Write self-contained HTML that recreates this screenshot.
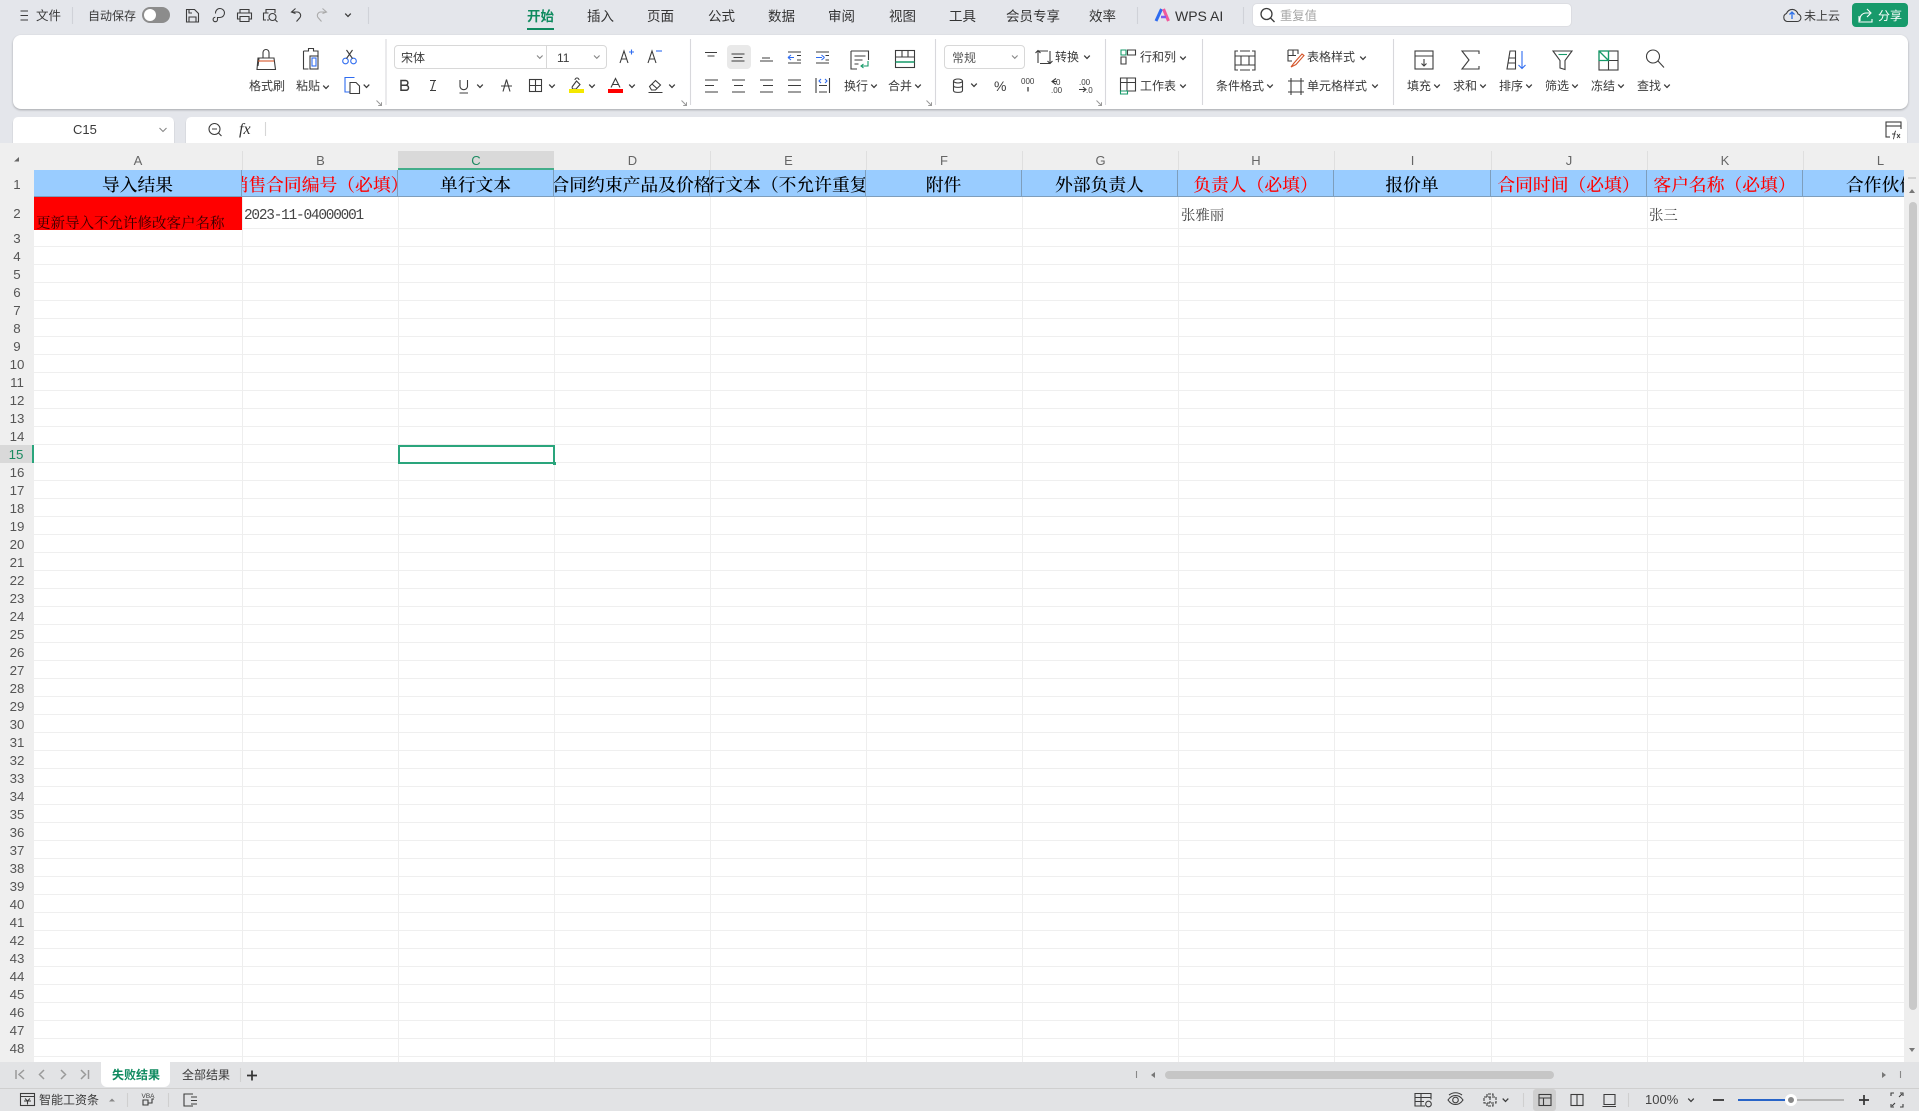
<!DOCTYPE html>
<html lang="zh-CN"><head><meta charset="utf-8"><title>WPS</title>
<style>
html,body{margin:0;padding:0}
body{width:1919px;height:1111px;position:relative;overflow:hidden;background:#e4e6eb;font-family:"Liberation Sans","Noto Sans CJK SC",sans-serif;color:#333}
div{box-sizing:border-box}
.a{position:absolute}
.t{position:absolute;white-space:nowrap;font-size:12px;line-height:16px;color:#3a3a3a}
.tab{font-size:13.5px;top:9px;color:#333}
.box{position:absolute;background:#fff;border:1px solid #d4d4d8;border-radius:4px}
#ribbon{position:absolute;left:13px;top:35px;width:1895px;height:74px;background:#fff;border-radius:8px;box-shadow:0 1px 2px rgba(0,0,0,.28)}
#grid{position:absolute;left:0;top:143px;width:1919px;height:919px;background:#fff;overflow:hidden}
#hdr{position:absolute;left:0;top:0;width:1919px;height:27px;background:#efefef}
#rn{position:absolute;left:0;top:27px;width:34px;height:892px;background:#efefef;overflow:hidden}
#rn div{height:18px;line-height:20px;text-align:center;font-size:13.3px;color:#555}
.l{position:absolute;top:8px;height:19px;line-height:19px;text-align:center;font-size:13px;color:#666}
.c{position:absolute;top:27px;height:27px;line-height:29px;text-align:center;overflow:hidden;white-space:nowrap;background:#99ccff;font-family:"Noto Serif CJK SC",serif;font-size:17.8px;color:#000;font-weight:500;border-right:1px solid #7e9ebc;border-bottom:1px solid #7e9ebc}
.r{color:#f00}
.v{position:absolute;top:54px;height:865px;width:1px;background:#eeeeee}
.d{position:absolute;font-family:"Noto Serif CJK SC",serif;font-size:14.4px;white-space:nowrap;color:#444;line-height:18px}
#icons{position:absolute;left:0;top:0;z-index:5}
#icons text{fill:#3c3c3c;stroke:none;font-family:"Liberation Sans",sans-serif}
</style></head><body>

<div class="box" style="left:1252px;top:3px;width:320px;height:24px;border-radius:5px;border-color:#dcdde2"></div>
<div class="a" style="left:1852px;top:3px;width:56px;height:24px;background:#179a6b;border-radius:4px"></div>
<div class="a" style="left:527px;top:28px;width:27px;height:2px;background:#0f8a5f"></div>

<div class="t" style="left:36px;top:8px;font-size:12.5px">文件</div>
<div class="t" style="left:88px;top:8px">自动保存</div>
<div class="t tab" style="left:527px;color:#0f8a5f;font-weight:700">开始</div>
<div class="t tab" style="left:587px">插入</div>
<div class="t tab" style="left:647px">页面</div>
<div class="t tab" style="left:708px">公式</div>
<div class="t tab" style="left:768px">数据</div>
<div class="t tab" style="left:828px">审阅</div>
<div class="t tab" style="left:889px">视图</div>
<div class="t tab" style="left:949px">工具</div>
<div class="t tab" style="left:1006px">会员专享</div>
<div class="t tab" style="left:1089px">效率</div>
<div class="t tab" style="left:1175px;font-size:14px;top:8px">WPS AI</div>
<div class="t" style="left:1280px;top:8px;color:#a6a6a6;font-size:12.3px">重复值</div>
<div class="t" style="left:1804px;top:8px">未上云</div>
<div class="t" style="left:1878px;top:8px;color:#fff">分享</div>

<div id="ribbon"></div>
<div class="t" style="left:249px;top:78px;z-index:2">格式刷</div>
<div class="t" style="left:296px;top:78px;z-index:2">粘贴</div>
<div class="box" style="left:394px;top:45px;width:213px;height:24px;z-index:2;border-color:#d8d8d8"></div>
<div class="a" style="left:546px;top:45px;width:1px;height:24px;background:#d8d8d8;z-index:2"></div>
<div class="t" style="left:401px;top:50px;z-index:2">宋体</div>
<div class="t" style="left:557px;top:50px;z-index:2">11</div>
<div class="a" style="left:727px;top:45px;width:24px;height:24px;background:#e9e9e9;border-radius:4px;z-index:2"></div>
<div class="t" style="left:844px;top:78px;z-index:2">换行</div>
<div class="t" style="left:888px;top:78px;z-index:2">合并</div>
<div class="box" style="left:944px;top:45px;width:81px;height:24px;z-index:2;border-color:#d8d8d8"></div>
<div class="t" style="left:952px;top:50px;z-index:2;color:#555">常规</div>
<div class="t" style="left:1055px;top:49px;z-index:2">转换</div>
<div class="t" style="left:1140px;top:49px;z-index:2">行和列</div>
<div class="t" style="left:1140px;top:78px;z-index:2">工作表</div>
<div class="t" style="left:1216px;top:78px;z-index:2">条件格式</div>
<div class="t" style="left:1307px;top:49px;z-index:2">表格样式</div>
<div class="t" style="left:1307px;top:78px;z-index:2">单元格样式</div>
<div class="t" style="left:1407px;top:78px;z-index:2">填充</div>
<div class="t" style="left:1453px;top:78px;z-index:2">求和</div>
<div class="t" style="left:1499px;top:78px;z-index:2">排序</div>
<div class="t" style="left:1545px;top:78px;z-index:2">筛选</div>
<div class="t" style="left:1591px;top:78px;z-index:2">冻结</div>
<div class="t" style="left:1637px;top:78px;z-index:2">查找</div>

<div class="a" style="left:13px;top:117px;width:161px;height:26px;background:#fff;border-radius:5px 5px 0 0;box-shadow:0 1px 1px rgba(0,0,0,.3)"></div>
<div class="a" style="left:186px;top:117px;width:1721px;height:26px;background:#fff;border-radius:5px 5px 0 0;box-shadow:0 1px 1px rgba(0,0,0,.3)"></div>
<div class="t" style="left:73px;top:122px;font-size:13px">C15</div>
<div class="t" style="left:239px;top:122px;font-family:'Liberation Serif',serif;font-style:italic;font-size:16px;color:#333">fx</div>

<div id="grid">
 <div id="hdr"></div>
 <div class="l" style="left:34px;width:208px">A</div>
 <div class="l" style="left:242px;width:157px">B</div>
 <div class="l" style="left:398px;width:156px;background:#d9d9d9;color:#1a8a60">C</div>
 <div class="l" style="left:554px;width:157px">D</div>
 <div class="l" style="left:710px;width:157px">E</div>
 <div class="l" style="left:866px;width:156px">F</div>
 <div class="l" style="left:1022px;width:157px">G</div>
 <div class="l" style="left:1178px;width:156px">H</div>
 <div class="l" style="left:1334px;width:157px">I</div>
 <div class="l" style="left:1491px;width:156px">J</div>
 <div class="l" style="left:1647px;width:156px">K</div>
 <div class="l" style="left:1803px;width:155px">L</div>
 <div class="a" style="left:242px;top:8px;width:1px;height:19px;background:#dfdfdf"></div>
 <div class="a" style="left:710px;top:8px;width:1px;height:19px;background:#dfdfdf"></div>
 <div class="a" style="left:866px;top:8px;width:1px;height:19px;background:#dfdfdf"></div>
 <div class="a" style="left:1022px;top:8px;width:1px;height:19px;background:#dfdfdf"></div>
 <div class="a" style="left:1178px;top:8px;width:1px;height:19px;background:#dfdfdf"></div>
 <div class="a" style="left:1334px;top:8px;width:1px;height:19px;background:#dfdfdf"></div>
 <div class="a" style="left:1491px;top:8px;width:1px;height:19px;background:#dfdfdf"></div>
 <div class="a" style="left:1647px;top:8px;width:1px;height:19px;background:#dfdfdf"></div>
 <div class="a" style="left:1803px;top:8px;width:1px;height:19px;background:#dfdfdf"></div>
 <div class="a" style="left:398px;top:25px;width:156px;height:2px;background:#43ad8a"></div>

 <div class="a" style="left:34px;top:86px;width:1870px;height:833px;background:repeating-linear-gradient(to bottom,#fff 0,#fff 17px,#efefef 17px,#efefef 18px)"></div>
 <div class="a" style="left:34px;top:85px;width:1870px;height:1px;background:#efefef"></div>
 <div class="v" style="left:242px"></div><div class="v" style="left:398px"></div><div class="v" style="left:554px"></div><div class="v" style="left:710px"></div><div class="v" style="left:866px"></div><div class="v" style="left:1022px"></div><div class="v" style="left:1178px"></div><div class="v" style="left:1334px"></div><div class="v" style="left:1491px"></div><div class="v" style="left:1647px"></div><div class="v" style="left:1803px"></div>

 <div class="c" style="left:34px;width:208px">导入结果</div>
 <div class="c r" style="left:242px;width:156px"><span style="display:inline-block;margin:0 -12px">销售合同编号（必填）</span></div>
 <div class="c" style="left:398px;width:156px">单行文本</div>
 <div class="c" style="left:554px;width:156px"><span style="display:inline-block;margin:0 -3px">合同约束产品及价格</span></div>
 <div class="c" style="left:710px;width:156px"><span style="display:inline-block;margin:0 -21px">多行文本（不允许重复）</span></div>
 <div class="c" style="left:866px;width:156px">附件</div>
 <div class="c" style="left:1022px;width:156px">外部负责人</div>
 <div class="c r" style="left:1178px;width:156px">负责人（必填）</div>
 <div class="c" style="left:1334px;width:157px">报价单</div>
 <div class="c r" style="left:1491px;width:156px">合同时间（必填）</div>
 <div class="c r" style="left:1647px;width:156px">客户名称（必填）</div>
 <div class="c" style="left:1803px;width:101px;border-right:0;text-align:left;padding-left:43px">合作伙伴</div>

 <div class="a" style="left:34px;top:54px;width:208px;height:33px;background:#f00"></div>
 <div class="d" style="left:36px;top:71px;color:#300;font-size:14.5px">更新导入不允许修改客户名称</div>
 <div class="d" style="left:244px;top:64px;font-family:'Liberation Mono',monospace;font-size:14.4px;letter-spacing:-1.2px">2023-11-04000001</div>
 <div class="d" style="left:1181px;top:63px">张雅丽</div>
 <div class="d" style="left:1649px;top:63px">张三</div>

 <div class="a" style="left:398px;top:302px;width:157px;height:19px;border:2px solid #2aa57c"></div>
 <div class="a" style="left:553px;top:319px;width:3px;height:3px;background:#2aa57c"></div>

 <div id="rn">
  <div style="height:27px;line-height:29px">1</div>
  <div style="height:32px;line-height:34px">2</div>
  <div>3</div><div>4</div><div>5</div><div>6</div><div>7</div><div>8</div><div>9</div><div>10</div><div>11</div><div>12</div><div>13</div><div>14</div>
  <div style="background:#d9d9d9;color:#1a8a60;border-right:2px solid #2aa57c">15</div>
  <div>16</div><div>17</div><div>18</div><div>19</div><div>20</div><div>21</div><div>22</div><div>23</div><div>24</div><div>25</div><div>26</div><div>27</div><div>28</div><div>29</div><div>30</div><div>31</div><div>32</div><div>33</div><div>34</div><div>35</div><div>36</div><div>37</div><div>38</div><div>39</div><div>40</div><div>41</div><div>42</div><div>43</div><div>44</div><div>45</div><div>46</div><div>47</div><div>48</div><div>49</div>
 </div>
 <div class="a" style="left:1904px;top:27px;width:15px;height:892px;background:#eeeeee"></div>
 <div class="a" style="left:1909px;top:59px;width:8px;height:808px;background:#c9c9c9;border-radius:4px"></div>
</div>

<div class="a" style="left:0;top:1062px;width:1919px;height:26px;background:#e2e3e5"></div>
<div class="a" style="left:0;top:1088px;width:1919px;height:23px;background:#e2e3e5;border-top:1px solid #cfcfcf"></div>
<div class="a" style="left:101px;top:1062px;width:69px;height:25px;background:#fff;border-radius:0 0 6px 6px"></div>
<div class="t" style="left:112px;top:1067px;color:#0f8a5f;font-weight:700;font-size:12px">失败结果</div>
<div class="t" style="left:182px;top:1067px">全部结果</div>
<div class="a" style="left:1165px;top:1071px;width:389px;height:8px;background:#c6c6c6;border-radius:4px"></div>
<div class="t" style="left:39px;top:1092px;font-size:12px">智能工资条</div>
<div class="a" style="left:1533px;top:1089px;width:23px;height:22px;background:#cfcfcf;border-radius:3px"></div>
<div class="t" style="left:1645px;top:1092px;color:#444;font-size:13px">100%</div>
<div class="a" style="left:1738px;top:1099px;width:53px;height:2px;background:#2764c8"></div>
<div class="a" style="left:1791px;top:1099px;width:53px;height:2px;background:#b3b3b3"></div>
<div class="a" style="left:1785px;top:1094px;width:12px;height:12px;background:#888;border:3px solid #fff;border-radius:50%"></div>

<svg id="icons" width="1919" height="1111" viewBox="0 0 1919 1111" fill="none" stroke="#3c3c3c" stroke-width="1.1">
<defs><path id="c" d="M-2.8-1.400 0 1.400 2.800-1.400" stroke-width="1.300"/><path id="k" d="M-2.500-2.500 2.500 2.500M2.500-.8V2.500H-.8" stroke="#999" stroke-width="1"/></defs>

<path d="M20.500 11H28M20.500 15.500H28M20.500 20H28"/>
<path stroke="#d0d2d8" d="M72.500 7V24M368.500 7V24M1137.500 7V24M1243.500 7V24"/>
<rect x="142" y="7" width="28" height="16" rx="8" fill="#8c8c8c" stroke="none"/><circle cx="150" cy="15" r="6" fill="#fff" stroke="none"/>
<path d="M186.500 9.500h8l4 4v8.500h-12zM189 22v-5h7v5M189 10v3h3"/>
<path d="M215.500 13.500a4.500 4.500 0 1 1 4.500 4h-2.500v2a2.200 2.200 0 1 1-2.200-2.200"/>
<path d="M240 13V9.500h9V13M240 19h-2.500v-6h14v6H249M240 16.500h9v5h-9z"/>
<path d="M266 13V9.500h9V13M266 20h-2.500v-7h5M267 20h2"/><circle cx="272.500" cy="17" r="3.500"/><path d="M275 19.500l2.500 2.500"/>
<path d="M295.500 8.500l-4 3.500 4 1.500M291.500 12h5.500a3.500 3.500 0 0 1 3 5.500l-3.500 4"/>
<path stroke="#aaa" d="M322.500 8.500l4 3.500-4 1.500M326.500 12H321a3.500 3.500 0 0 0-3 5.500l3.500 4"/>
<use href="#c" x="348" y="15"/>

<path d="M1156 21 1161.500 9" stroke="#2f6cf0" stroke-width="3"/><path d="M1163.500 9 1168.500 21" stroke="#f05a9c" stroke-width="3"/><path d="M1161 17h5" stroke="#7a5df0" stroke-width="2.500"/>
<circle cx="1266.500" cy="14" r="5.500" stroke-width="1.300"/><path d="M1270.500 18l4 4" stroke-width="1.300"/>
<path d="M1787 21.500h10a3.800 3.800 0 0 0 1-7.500 6 6 0 0 0-11.500-.5 4.200 4.200 0 0 0 .5 8z"/><path stroke="#2a6fe8" d="M1792 19v-7M1789.500 14.500l2.500-2.500 2.500 2.500" stroke-width="1.300"/>
<path stroke="#fff" d="M1860 21v-2a6 6 0 0 1 6-6h4M1867 9l4 4-4 4M1859 16v6h13v-3"/>

<path d="M263 58v-5.500a3 3 0 0 1 6 0V58M258 58h16l1.500 11.500H257zM259 58l-1 8"/><path stroke="#d4552a" d="M258 61h16"/>
<path d="M303.500 51h5V48.500h5V51h4.500v6M303.500 51v18h5"/><rect x="310" y="56" width="8" height="13"/><rect x="312" y="58" width="4" height="8" stroke="#2f6cf0"/>
<g stroke="#2f6cf0"><circle cx="345.500" cy="61" r="2.800"/><circle cx="353.500" cy="61" r="2.800"/></g><path d="M346.500 58.500 352.500 50M352.500 58.500 346.500 50"/>
<path stroke="#2f6cf0" d="M350 92h-5V77.500h9.500"/><path d="M350 82.500h6l3.500 3.500v7.500H350z"/>
<use href="#c" x="326" y="87"/><use href="#c" x="366.500" y="86"/>
<use href="#k" x="379" y="103"/>
<path stroke="#d8d8dc" d="M386 39V105M690.500 39V105M935.500 39V105M1105.500 39V105M1202.500 39V105M1393.500 39V105"/>
<path d="M537 55.500l2.800 2.800 2.800-2.800M594 55.500l2.800 2.800 2.800-2.800M1012 55.500l2.800 2.800 2.800-2.800" stroke="#888"/>

<path d="M620 63l4-12 4 12M621.500 59h5"/><path stroke="#2f6cf0" d="M629 52h5M631.500 49.500v5"/>
<path d="M648 63l4-12 4 12M649.500 59h5"/><path stroke="#2f6cf0" d="M656 51h6"/>
<path d="M401 80.500h4.500a2.300 2.300 0 0 1 0 4.800H401zM401 85.300h5a2.500 2.500 0 0 1 0 5h-5z" stroke-width="1.500"/>
<path d="M430 80.500h6M436 90.500h-6M434.500 80.500l-3 10"/>
<path d="M460 80v6.500a3.800 3.800 0 0 0 7.500 0V80M459.500 93h8.500"/>
<path d="M501 86h11M506.500 79.500l-3.500 12M506.500 79.500l3.500 12"/>
<rect x="529.500" y="79.500" width="12" height="12"/><path d="M535.500 79.500v12M529.500 85.500h12"/>
<path d="M572 87l4.500-6 3.500 3.500-4 4.500h-3.500l-.5-2M575 80a2 2 0 0 1 4 0"/><rect x="569" y="89" width="15" height="4" fill="#f4e800" stroke="none"/>
<path d="M611 87.500l4.500-9 4.500 9M612.500 84.500h6"/><rect x="608" y="89" width="15" height="4" fill="#f00" stroke="none"/>
<path d="M649.500 86.500l6-6 5 4.500-5 5h-4zM652 84l5 4.500M648.500 92.500h14"/>
<use href="#c" x="480" y="86"/><use href="#c" x="552" y="86"/><use href="#c" x="592" y="86"/><use href="#c" x="632" y="86"/><use href="#c" x="672" y="86"/>
<use href="#k" x="684" y="103"/>

<path d="M705 52.500h12M707.500 56h7M731.500 54h13M733.500 57.500h9M731.500 61h13M760 61h13M762 58h8"/>
<path d="M788 52h13M788 63h13M797 55.500h4M797 60h4M816 52h13M816 63h13M825.500 55.500h3.500M825.500 60h3.500"/>
<path stroke="#2f6cf0" d="M788 57.500l3-2.500M788 57.500l3 2.500M788 57.500h6M816 57.500h6M824.500 57.500l-3-2.500M824.500 57.500l-3 2.500"/>
<path d="M705 80h13M705 85.500h9M705 92h13M732 80h13M734 85.500h9M732 92h13M760 80h13M763 85.500h10M760 92h13M788 80h13M788 85.500h13M788 92h13M816 78v15M829.500 78v15M819 85.500h8M819 92h8"/>
<path stroke="#2f6cf0" d="M821 79l-2 2 2 2M825 79l2 2-2 2"/>
<path d="M851 51h17.500v9M851 51v18h6M854.500 56h11M854.500 60h8M854.500 64h4"/><path stroke="#159a68" d="M868 61v5h-7M863.500 64l-2.500 2 2.500 2"/>
<rect x="895.500" y="50.500" width="19" height="17"/><path d="M895.500 57h19M902 50.500V57M908 50.500V57"/><path stroke="#159a68" d="M895.500 62h19" stroke-width="1.400"/>
<use href="#c" x="874" y="86"/><use href="#c" x="918" y="86"/><use href="#k" x="929" y="103"/>

<path d="M1038 63V51h10M1035.500 53l2.500-2.500 2.500 2.500M1050 51v12.500h-10M1052.500 61l-2.500 2.500-2.500-2.500"/>
<use href="#c" x="1087" y="57"/>
<ellipse cx="958" cy="81" rx="4.500" ry="2"/><path d="M953.500 81v9.500c0 2.500 9 2.500 9 0V81M953.500 85.500c0 2.500 9 2.500 9 0"/>
<use href="#c" x="974" y="85"/>
<text x="994" y="91" font-size="14">%</text>
<text x="1021" y="84" font-size="8">000</text><path d="M1028 87v4.500" stroke-width="1.300"/>
<path d="M1056 78.500l-4 3 4 3M1052 81.500h5"/><text x="1056" y="85" font-size="8">0</text><text x="1051" y="93" font-size="8">.00</text>
<text x="1079" y="85" font-size="8">.00</text><path d="M1079 89.500h6M1083 87l3 2.500-3 2.500"/><text x="1086" y="93" font-size="8">.0</text>
<use href="#k" x="1099" y="103"/>

<path d="M1127.500 50h8v5h-8z"/><path stroke="#159a68" d="M1121 50h5v5h-5z"/><path d="M1121 57h5v7h-5z"/>
<use href="#c" x="1183" y="58"/>
<path d="M1120.500 78h15v13h-15zM1120.500 82.500h15M1127 78v13"/><path stroke="#159a68" d="M1120.500 91h7v3h-7z"/>
<use href="#c" x="1183" y="86"/>
<path d="M1238 51h-3v19h3M1252 51h3v19h-3M1240 51h10M1240 70h10M1235 56h6M1255 56h-6M1235 65h6M1255 65h-6M1241 56v9M1249 56v9M1241 56h8M1241 65h8"/>
<use href="#c" x="1270" y="86"/>
<path d="M1288 50h10v4M1288 50v11h4M1288 55.500h8M1293 50v6"/><path stroke="#d4552a" d="M1291 67l3-4 8-9 2 1.500-8 9-5 2.500z"/>
<use href="#c" x="1363" y="58"/>
<path d="M1288 81h16M1288 92h16M1291 78v17M1301 78v17"/>
<use href="#c" x="1375" y="86"/>

<rect x="1415" y="51" width="18" height="18"/><path d="M1415 56h18M1424 59v6.500M1421.500 63.500l2.500 2.500 2.500-2.500"/>
<path d="M1479 54v-3h-17l7 9-7 9h17v-3"/>
<path d="M1510 51h5.500v18H1507zM1509 58h6.500M1508 63h7.500"/><path stroke="#2f6cf0" d="M1522 51v17M1518.500 65l3.500 3.500 3.500-3.500"/>
<path d="M1553 51h19l-7 9.500v9l-5-1.500v-7.500z"/><path stroke="#159a68" d="M1558.500 54.500h8.500"/>
<rect x="1599" y="51" width="19" height="19"/><path d="M1608.500 51v19M1599 60.500h19"/><path stroke="#159a68" d="M1599 60.500V51h9.500v9.500zM1599 51l9.500 9.500" stroke-width="1.300"/>
<circle cx="1653" cy="56.500" r="6.500"/><path d="M1658 61l6 6.500"/>
<use href="#c" x="1437" y="86"/><use href="#c" x="1483" y="86"/><use href="#c" x="1529" y="86"/><use href="#c" x="1575" y="86"/><use href="#c" x="1621" y="86"/><use href="#c" x="1667" y="86"/>

<path stroke="#888" d="M159.500 128l3.500 3.500 3.500-3.500"/>
<circle cx="214.500" cy="129" r="5.500"/><path d="M218.500 133l3 3M212 129h5"/>
<path stroke="#d6d6d6" d="M265.500 122v14"/>
<rect x="1886" y="122" width="15" height="15"/><path d="M1886 126h15"/>
<rect x="1890" y="129" width="14" height="11" fill="#fff" stroke="none"/><path d="M1893 139c1.500 0 1-8 3-8M1892 134h3.500M1897 134l3 4M1900 134l-3 4" stroke-width="1"/>

<path d="M19 157l-5 4.500h5z" fill="#666" stroke="none"/>

<path d="M1908 178h8" stroke="#bbb"/><path d="M1909 193l3-4 3 4z" fill="#777" stroke="none"/><path d="M1909 1048h6l-3 4z" fill="#777" stroke="none"/>
<path d="M1136.500 1071v7M1900.500 1071v7" stroke="#888"/><path d="M1155 1072l-4 3 4 3zM1882 1072l4 3-4 3z" fill="#777" stroke="none"/>

<path stroke="#999" stroke-width="1.500" d="M16 1070v9M24 1070l-5 4.500 5 4.500M44 1070l-4.500 4.500 4.500 4.500M61 1070l4.500 4.500-4.500 4.500M81 1070l4.500 4.500-4.500 4.500M88.500 1070v9"/>
<path stroke="#d0d0d0" d="M240.500 1068v14"/>
<path stroke="#333" stroke-width="1.700" d="M247 1075.500h10M252 1070.500v10"/>

<rect x="20.500" y="1093.500" width="14" height="12"/><path d="M20.500 1096.500h14M25 1098.500l2.500 2.500 2.500-2.500M24 1101h7M27.500 1101v3.500"/>
<path d="M109 1101.500h6l-3-3z" fill="#888" stroke="none"/>
<path stroke="#cfcfcf" d="M127.500 1093v14M168.500 1093v14M1523.500 1093v14M1628.500 1093v14"/>
<text x="141.500" y="1098" font-size="6.500">VBA</text>
<path d="M143 1100h5v5h-5zM148 1103h4v-4h2"/>
<path d="M193 1094h-9v12h9M191 1097h6M191 1100.500h6M191 1104h6"/>

<path d="M1425 1106h-10v-12.500h16v6M1415 1097.500h16M1415 1101.500h9M1421 1093.500v12.500"/><circle cx="1428.500" cy="1104" r="2.800"/>
<path d="M1448 1100c4-6 11-6 15 0-4 6-11 6-15 0z"/><circle cx="1455.500" cy="1100" r="2.800"/><path d="M1449 1095c4-3 9-3 13 0"/>
<path d="M1487 1097v-3h6v3M1487 1103v3h6v-3M1484 1097h12v6h-12zM1490 1097v6" stroke-dasharray="3 1"/>
<use href="#c" x="1505.500" y="1100"/>
<rect x="1539" y="1094.500" width="12" height="11"/><path d="M1539 1098h12M1543.500 1098v7.500"/>
<rect x="1571" y="1094.500" width="12" height="11"/><path d="M1577 1094.500v11"/>
<path d="M1604 1094.500h11v10h-11zM1602.500 1106.500h13.500"/>
<use href="#c" x="1691" y="1100"/>
<path stroke="#333" stroke-width="1.700" d="M1713 1100h11M1859 1100h10M1864 1095v10"/>
<path d="M1891 1096v-3h3M1903 1096v-3h-3M1891 1104v3h3M1903 1104v3h-3M1892 1106l3-3M1902 1094l-3 3"/>
</svg>
</body></html>
